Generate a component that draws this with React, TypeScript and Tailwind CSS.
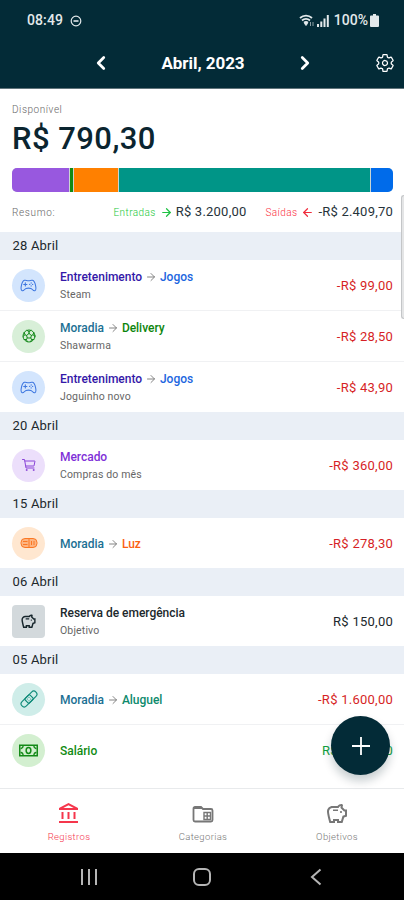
import type { ReactNode } from 'react';
import { ArrowLeft, ArrowRight, ChevronLeft, ChevronRight } from 'lucide-react';
import {
  IoBandageOutline,
  IoCartOutline,
  IoFootballOutline,
  IoGameControllerOutline,
  IoSettingsOutline,
} from 'react-icons/io5';

const PiggyBank = ({ className }: { className?: string }) => (
  <svg viewBox="0 0 24 24" fill="currentColor" className={className}>
    <path d="M15 10C15 9.45 15.45 9 16 9S17 9.45 17 10 16.55 11 16 11 15 10.55 15 10M8 9H13V7.500H8V9M22 7.5V14.47L19.18 15.41L17.5 21H12V19H10V21H4.5C4.5 21 2 12.54 2 9.5S4.46 4 7.5 4H12.5C13.41 2.79 14.86 2 16.5 2C17.33 2 18 2.67 18 3.5C18 3.71 17.96 3.9 17.88 4.08C17.74 4.42 17.62 4.81 17.56 5.23L19.83 7.5H22M20 9.5H19L15.5 6C15.5 5.35 15.59 4.71 15.76 4.09C14.79 4.34 14 5.06 13.67 6H7.5C5.57 6 4 7.57 4 9.5C4 11.38 5.22 16.15 6 19H8V17H14V19H16L17.56 13.85L20 13.03V9.5Z" />
  </svg>
);

const Bank = () => (
  <svg viewBox="0 0 24 24" fill="currentColor" className="size-6">
    <path d="M6.5 10H4.5V17H6.5V10M12.5 10H10.5V17H12.5V10M21 19H2V21H21V19M18.5 10H16.5V17H18.5V10M11.5 3.26L16.71 6H6.29L11.5 3.26M11.5 1L2 6V8H21V6L11.5 1Z" />
  </svg>
);

const FolderTable = () => (
  <svg viewBox="0 0 24 24" fill="none" stroke="currentColor" strokeWidth="1.8" className="size-6">
    <path d="M2.500 6.500V18a1.500 1.500 0 0 0 1.500 1.500h16a1.500 1.500 0 0 0 1.500-1.500V8.500A1.500 1.500 0 0 0 20 7h-8l-2-2H4a1.500 1.500 0 0 0-1.500 1.500Z" />
    <path d="M3 5h7l2 2H3Z" fill="currentColor" stroke="none" />
    <path d="M13 10.500h6.500v7H13zM16.200 10.500v7M13 14h6.500" strokeWidth="1.400" />
  </svg>
);

const Cash = () => (
  <svg viewBox="0 0 24 24" fill="none" stroke="currentColor" strokeWidth="1.700" className="size-[21px]">
    <path d="M2 6h20v12H2z" />
    <path d="M3 10a4 4 0 0 0 3-3M21 10a4 4 0 0 1-3-3M3 14a4 4 0 0 1 3 3M21 14a4 4 0 0 0-3 3" />
    <ellipse cx="12" cy="12" rx="2.700" ry="3.300" />
  </svg>
);

const Bulbs = () => (
  <svg viewBox="0 0 18 12" fill="none" stroke="currentColor" className="h-3 w-[18px]">
    <rect x="1" y="1.500" width="16" height="9" rx="4" fill="currentColor" fillOpacity="0.450" />
    <path d="M3 4.500h4.500M3 7.500h4.500M9 2v8M11.500 4v4M14 4v4" />
  </svg>
);

type Entry = {
  icon: ReactNode;
  badge: string;
  category: string;
  color: string;
  sub?: string;
  subColor?: string;
  note?: string;
  amount: string;
  amountColor: string;
};

const games = {
  icon: <IoGameControllerOutline className="size-[17px]" />,
  badge: 'rounded-full bg-[#d3e5fd] text-[#3f78e0]',
  category: 'Entretenimento',
  color: 'text-[#3418a8]',
  sub: 'Jogos',
  subColor: 'text-[#1d66e0]',
};

const red = 'text-[#d61f26]';

const days: { date: string; entries: Entry[] }[] = [
  {
    date: '28 Abril',
    entries: [
      { ...games, note: 'Steam', amount: '-R$ 99,00', amountColor: red },
      {
        icon: <IoFootballOutline className="size-4" />,
        badge: 'rounded-full bg-[#d8efd8] text-[#168a1c]',
        category: 'Moradia',
        color: 'text-[#1b7093]',
        sub: 'Delivery',
        subColor: 'text-[#0c850c]',
        note: 'Shawarma',
        amount: '-R$ 28,50',
        amountColor: red,
      },
      { ...games, note: 'Joguinho novo', amount: '-R$ 43,90', amountColor: red },
    ],
  },
  {
    date: '20 Abril',
    entries: [
      {
        icon: <IoCartOutline className="size-4" />,
        badge: 'rounded-full bg-[#ecdffb] text-[#8a45d8]',
        category: 'Mercado',
        color: 'text-[#8030d8]',
        note: 'Compras do mês',
        amount: '-R$ 360,00',
        amountColor: red,
      },
    ],
  },
  {
    date: '15 Abril',
    entries: [
      {
        icon: <Bulbs />,
        badge: 'rounded-full bg-[#ffe7d0] text-[#fb7824]',
        category: 'Moradia',
        color: 'text-[#1b7093]',
        sub: 'Luz',
        subColor: 'text-[#fb6010]',
        amount: '-R$ 278,30',
        amountColor: red,
      },
    ],
  },
  {
    date: '06 Abril',
    entries: [
      {
        icon: <PiggyBank className="size-[17px]" />,
        badge: 'rounded bg-[#d3d9dc] text-[#17262c]',
        category: 'Reserva de emergência',
        color: 'text-[#20282c]',
        note: 'Objetivo',
        amount: 'R$ 150,00',
        amountColor: 'text-[#20282c]',
      },
    ],
  },
  {
    date: '05 Abril',
    entries: [
      {
        icon: <IoBandageOutline className="size-[18px]" />,
        badge: 'rounded-full bg-[#cfede9] text-[#0d8a78]',
        category: 'Moradia',
        color: 'text-[#1b7093]',
        sub: 'Aluguel',
        subColor: 'text-[#0d8a6c]',
        amount: '-R$ 1.600,00',
        amountColor: red,
      },
      {
        icon: <Cash />,
        badge: 'rounded-full bg-[#d3efd0] text-[#148a18]',
        category: 'Salário',
        color: 'text-[#128c14]',
        amount: 'R$ 3.200,00',
        amountColor: 'text-[#12a03c]',
      },
    ],
  },
];

function EntryRow({ entry }: { entry: Entry }) {
  return (
    <div className="flex h-[51px] shrink-0 items-center border-b border-[#f0f1f3] px-[11px] pl-3 last:h-[50px] last:border-0">
      <div className={`flex size-[33px] shrink-0 items-center justify-center ${entry.badge}`}>{entry.icon}</div>
      <div className="ml-[15px] flex-1 pt-px">
        <div className="flex h-[17px] items-center text-[12px] font-medium tracking-[-0.03px]">
          <span className={entry.color}>{entry.category}</span>
          {entry.sub && (
            <>
              <ArrowRight className="mx-[3px] size-3 text-[#777]" strokeWidth={1.8} />
              <span className={entry.subColor}>{entry.sub}</span>
            </>
          )}
        </div>
        {entry.note && <div className="h-[17px] text-[10.5px] leading-[18px] tracking-[0.15px] text-[#666]">{entry.note}</div>}
      </div>
      <div className={`pt-[2px] text-[13px] tracking-[0.25px] ${entry.amountColor}`}>{entry.amount}</div>
    </div>
  );
}

export default function App() {
  return (
    <div className="relative flex h-[900px] w-[404px] flex-col overflow-hidden bg-white font-['Roboto',sans-serif]">
      {/* Status bar + month picker */}
      <header className="h-[89px] shrink-0 border-b border-[#60747b] bg-[#032b37] text-white">
        <div className="flex h-[41px] items-center justify-between pr-[25px] pl-[27px] text-[14px] text-[#e3e9eb]">
          <div className="flex items-center gap-[7px]">
            <span className="font-medium tracking-[0.1px]">08:49</span>
            <svg viewBox="0 0 12 12" fill="none" stroke="currentColor" className="size-3">
              <circle cx="6" cy="6" r="4.800" strokeWidth="1.200" />
              <path d="M3.500 6h5" strokeWidth="1.600" />
            </svg>
          </div>
          <div className="flex items-center">
            <svg viewBox="0 0 15 13" fill="none" stroke="currentColor" className="mr-[3px] h-[13px] w-[15px]">
              <path d="M1 4C4.500.8 9.500.8 13 4M3 6.500c2.300-2 5.700-2 8 0M5 8.800c1.200-1 2.800-1 4 0" strokeWidth="1.800" />
              <path d="M7 11.500 5.500 9.500h3Z" fill="currentColor" />
              <path d="M11.500 8v4M14 8v4" strokeWidth="1" opacity="0.600" />
            </svg>
            <svg viewBox="0 0 12 12" fill="currentColor" className="mr-[5px] size-3">
              <path d="M0 9h2v3H0zM3.300 6.500h2V12h-2zM6.500 3.500h2V12h-2zM9.800 0h2v12h-2z" />
            </svg>
            <span className="font-medium">100%</span>
            <svg viewBox="0 0 9 13" fill="currentColor" className="ml-[2px] h-[13px] w-[9px]">
              <path d="M3 0h3v1.500h2A1 1 0 0 1 9 2.500V12a1 1 0 0 1-1 1H1a1 1 0 0 1-1-1V2.500a1 1 0 0 1 1-1h2Z" />
            </svg>
          </div>
        </div>
        <div className="grid h-[43px] grid-cols-[90px_1fr_90px] items-center">
          <span />
          <div className="flex items-center justify-between">
            <ChevronLeft className="size-[22px]" strokeWidth={3} />
            <span className="pt-[2px] text-[17px] font-bold tracking-[-0.05px]">Abril, 2023</span>
            <ChevronRight className="mr-[-2px] size-[22px]" strokeWidth={3} />
          </div>
          <IoSettingsOutline className="mr-[9px] size-5 justify-self-end" />
        </div>
      </header>

      {/* Balance */}
      <section className="h-[143px] shrink-0 pt-[13px] pr-[11px] pl-3">
        <p className="text-[10px] leading-4 font-light tracking-[0.55px] text-[#666]">Disponível</p>
        <p className="text-[31px] leading-[42px] font-medium tracking-[0.45px] text-[#0b2530]">R$ 790,30</p>
        <div className="mt-2 flex h-6 gap-px overflow-hidden rounded-[5px] bg-[#c9d5d3]">
          <div className="w-[57px] bg-[#9858df]" />
          <div className="w-[3px] bg-[#138a13]" />
          <div className="w-[44px] bg-[#ff8000]" />
          <div className="flex-1 bg-[#009587]" />
          <div className="w-[22px] bg-[#006bea]" />
        </div>
        <div className="mt-[11px] flex h-[18px] items-center text-[13px] tracking-[0.22px] text-[#26333a]">
          <span className="text-[10px] font-light tracking-[0.65px] text-[#666]">Resumo:</span>
          <span className="ml-auto text-[10px] font-light tracking-[0.4px] text-[#18c83a]">Entradas</span>
          <ArrowRight className="mr-[3px] ml-1 size-[13px] text-[#1fc244]" strokeWidth={2.2} />
          <span>R$ 3.200,00</span>
          <span className="ml-[19px] text-[10px] font-light tracking-[0.4px] text-[#fb2c3c]">Saídas</span>
          <ArrowLeft className="mx-1 size-[13px] text-[#f02c3c]" strokeWidth={2.2} />
          <span>-R$ 2.409,70</span>
        </div>
      </section>

      {/* Records by day */}
      <main className="flex-1 overflow-hidden">
        {days.map((day) => (
          <div key={day.date}>
            <h2 className="flex h-7 items-center bg-[#eaeff6] pl-[12.5px] text-[13px] tracking-[0.2px] text-[#20282c]">{day.date}</h2>
            <div>
              {day.entries.map((entry, i) => (
                <EntryRow key={i} entry={entry} />
              ))}
            </div>
          </div>
        ))}
      </main>

      {/* Scroll thumb */}
      <div className="absolute top-[195px] right-0 h-[124px] w-[3px] rounded-l border border-r-0 border-[#c4c6c8] bg-[#e4e5e6]" />

      <button className="absolute top-[716px] left-[331px] flex size-[59px] items-center justify-center rounded-full bg-[#032b37] shadow-[0_6px_10px_rgba(0,30,40,0.22)]">
        <svg viewBox="0 0 18 18" stroke="#fff" strokeWidth="1.800" className="size-[18px]">
          <path d="M9 0v18M0 9h18" />
        </svg>
      </button>

      {/* Tab bar */}
      <nav className="grid h-[65px] shrink-0 grid-cols-3 border-t border-[#e8eaec] pl-[2px] text-[9.5px] font-light tracking-[0.35px] text-[#777]">
        <div className="flex flex-col items-center pt-[13px] text-[#f5364c]">
          <Bank />
          <span className="mt-1">Registros</span>
        </div>
        <div className="flex flex-col items-center pt-[13px]">
          <FolderTable />
          <span className="mt-1">Categorias</span>
        </div>
        <div className="flex flex-col items-center pt-[13px]">
          <PiggyBank className="size-6" />
          <span className="mt-1">Objetivos</span>
        </div>
      </nav>

      {/* Android navigation */}
      <footer className="grid h-[47px] shrink-0 grid-cols-[113px_113px_115px] items-center justify-center justify-items-center bg-black pl-[2px] text-[#b5b5b5]">
        <svg viewBox="0 0 18 18" stroke="currentColor" strokeWidth="2" className="size-[18px]">
          <path d="M2 1v16M9 1v16M16 1v16" />
        </svg>
        <div className="size-[18px] rounded-[6px] border-2 border-current" />
        <svg viewBox="0 0 12 18" fill="none" stroke="currentColor" strokeWidth="2" className="h-[18px] w-3">
          <path d="M10.500 1.500 2 9l8.500 7.500" />
        </svg>
      </footer>
    </div>
  );
}
